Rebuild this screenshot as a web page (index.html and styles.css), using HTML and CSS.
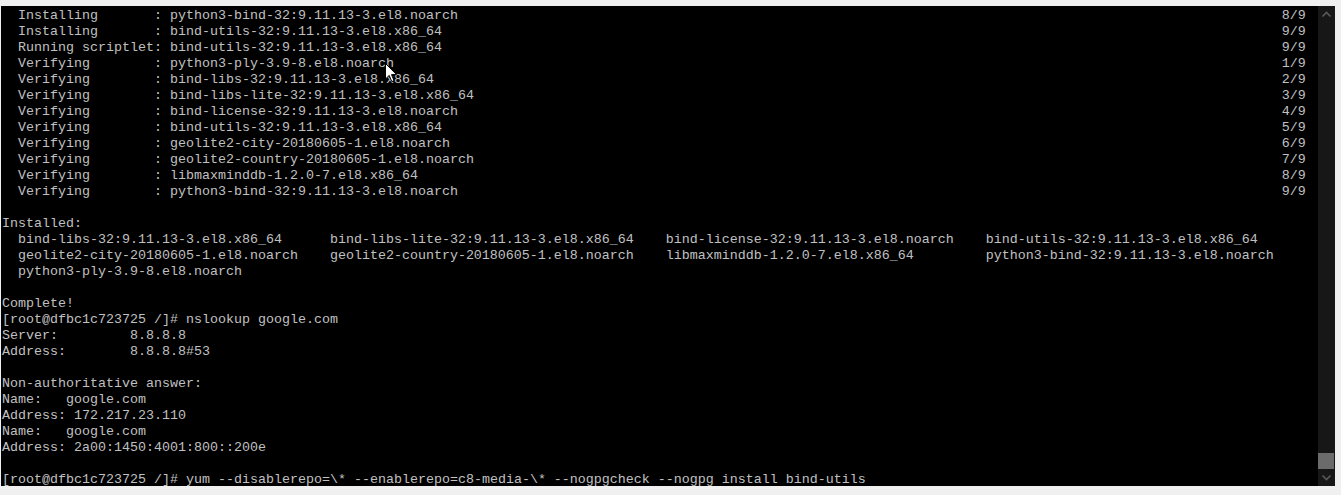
FILE: index.html
```html
<!DOCTYPE html>
<html>
<head>
<meta charset="utf-8">
<link rel="stylesheet" href="styles.css">
</head>
<body>
<div class="frame">
  <div class="screen">
    <div class="row"><span>  Installing       : python3-bind-32:9.11.13-3.el8.noarch</span><span>8/9</span></div>
    <div class="row"><span>  Installing       : bind-utils-32:9.11.13-3.el8.x86_64</span><span>9/9</span></div>
    <div class="row"><span>  Running scriptlet: bind-utils-32:9.11.13-3.el8.x86_64</span><span>9/9</span></div>
    <div class="row"><span>  Verifying        : python3-ply-3.9-8.el8.noarch</span><span>1/9</span></div>
    <div class="row"><span>  Verifying        : bind-libs-32:9.11.13-3.el8.x86_64</span><span>2/9</span></div>
    <div class="row"><span>  Verifying        : bind-libs-lite-32:9.11.13-3.el8.x86_64</span><span>3/9</span></div>
    <div class="row"><span>  Verifying        : bind-license-32:9.11.13-3.el8.noarch</span><span>4/9</span></div>
    <div class="row"><span>  Verifying        : bind-utils-32:9.11.13-3.el8.x86_64</span><span>5/9</span></div>
    <div class="row"><span>  Verifying        : geolite2-city-20180605-1.el8.noarch</span><span>6/9</span></div>
    <div class="row"><span>  Verifying        : geolite2-country-20180605-1.el8.noarch</span><span>7/9</span></div>
    <div class="row"><span>  Verifying        : libmaxminddb-1.2.0-7.el8.x86_64</span><span>8/9</span></div>
    <div class="row"><span>  Verifying        : python3-bind-32:9.11.13-3.el8.noarch</span><span>9/9</span></div>
    <div class="line"> </div>
    <div class="line">Installed:</div>
    <div class="pkgs">
      <span>bind-libs-32:9.11.13-3.el8.x86_64</span>
      <span>bind-libs-lite-32:9.11.13-3.el8.x86_64</span>
      <span>bind-license-32:9.11.13-3.el8.noarch</span>
      <span>bind-utils-32:9.11.13-3.el8.x86_64</span>
      <span>geolite2-city-20180605-1.el8.noarch</span>
      <span>geolite2-country-20180605-1.el8.noarch</span>
      <span>libmaxminddb-1.2.0-7.el8.x86_64</span>
      <span>python3-bind-32:9.11.13-3.el8.noarch</span>
      <span>python3-ply-3.9-8.el8.noarch</span>
    </div>
    <div class="line"> </div>
    <div class="line">Complete!</div>
    <div class="line">[root@dfbc1c723725 /]# nslookup google.com</div>
    <div class="line">Server:         8.8.8.8</div>
    <div class="line">Address:        8.8.8.8#53</div>
    <div class="line"> </div>
    <div class="line">Non-authoritative answer:</div>
    <div class="line">Name:   google.com</div>
    <div class="line">Address: 172.217.23.110</div>
    <div class="line">Name:   google.com</div>
    <div class="line">Address: 2a00:1450:4001:800::200e</div>
    <div class="line"> </div>
    <div class="line">[root@dfbc1c723725 /]# yum --disablerepo=\* --enablerepo=c8-media-\* --nogpgcheck --nogpg install bind-utils</div>
    <svg class="pointer" width="13" height="20" viewBox="0 0 13 20"><path d="M0.5 0.5 L0.5 16 L4.2 12.4 L6.8 18.6 L9 17.6 L6.5 11.6 L11.5 11.6 Z" fill="#fff" stroke="#000" stroke-width="1"/></svg>
  </div>
  <div class="scrollbar">
    <svg class="arrow" width="17" height="17" viewBox="0 0 17 17"><path d="M4.5 10.5 L8.5 6.5 L12.5 10.5" fill="none" stroke="#5a5a5a" stroke-width="1.6"/></svg>
    <div class="track"></div>
    <div class="thumb"></div>
    <svg class="arrow" width="17" height="17" viewBox="0 0 17 17"><path d="M4.5 6.5 L8.5 10.5 L12.5 6.5" fill="none" stroke="#5a5a5a" stroke-width="1.6"/></svg>
  </div>
</div>
</body>
</html>
```

FILE: styles.css
```css
html, body {
  margin: 0;
  padding: 0;
  background: #f0f0f0;
}

.frame {
  display: flex;
  margin: 6px 0 0 1px;
  width: 1334px;
  height: 480px;
}

.screen {
  position: relative;
  width: 1317px;
  height: 480px;
  box-sizing: border-box;
  padding: 2px 0 0 1px;
  background: #000;
  color: #c0c0c0;
  font-family: "Liberation Mono", "Courier New", monospace;
  font-size: 13.333px;
  line-height: 16px;
  overflow: hidden;
}

.row {
  display: flex;
  justify-content: space-between;
  width: 163ch;
  height: 16px;
  white-space: pre;
}

.line {
  height: 16px;
  white-space: pre;
}

.pkgs {
  display: grid;
  grid-template-columns: 39ch 42ch 40ch auto;
  padding-left: 2ch;
  grid-auto-rows: 16px;
  white-space: pre;
}

.pointer {
  position: absolute;
  left: 384px;
  top: 57px;
}

.scrollbar {
  display: flex;
  flex-direction: column;
  width: 17px;
  height: 480px;
  background: #171717;
}

.arrow {
  display: block;
  flex: none;
}

.track {
  flex: 1;
}

.thumb {
  flex: none;
  height: 16px;
  margin: 0 1px 0 0;
  background: #6b6b6b;
}
```
